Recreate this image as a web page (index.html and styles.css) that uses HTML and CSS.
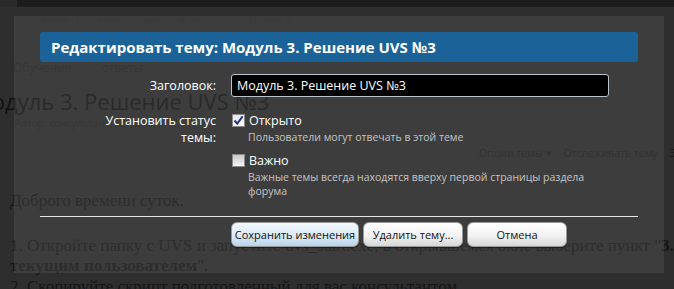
FILE: index.html
```html
<!DOCTYPE html>
<html>
	<head>
		<meta charset="UTF-8">
		<title>Редактировать тему</title>
		<link rel="stylesheet" href="styles.css">
	</head>
	<body>
		<div class="page">
			<div class="topbar"><span class="logo"></span></div>
			<div class="crumbs">Форум &rsaquo; Программы &rsaquo; Удалённый доступ &rsaquo; UVS &rsaquo; Модуль 3</div>
			<div class="tabs"><span>Обучение</span><span>ответы</span></div>
			<h1 class="topic">Модуль 3. Решение UVS №3</h1>
			<div class="byline">Автор: консультант, сегодня</div>
			<div class="tools"><span>Опции темы &#9662;</span><span>Отслеживать тему</span><span>Э</span></div>
			<div class="post">
				<p>Доброго времени суток.</p>
				<p class="line">1. Откройте папку с UVS и запустите uvs_start.exe, в открывшемся окне выберите пункт "<b>3. Запуск под</b></p>
				<p class="line"><b>текущим пользователем</b>".</p>
				<p class="line">2. Скопируйте скрипт подготовленный для вас консультантом</p>
			</div>
		</div>

		<div class="dialog">
			<div class="dialog-title">Редактировать тему: Модуль 3. Решение UVS №3</div>
			<div class="form">
				<label class="label label-title" for="title">Заголовок:</label>
				<input class="field" id="title" type="text" value="Модуль 3. Решение UVS №3">

				<div class="label label-status">Установить статус<br>темы:</div>
				<div class="options">
					<div class="option">
						<div class="option-head"><span class="check on"><svg width="11" height="11" viewBox="0 0 11 11"><path d="M1.5 5.5 L4.2 8.6 L9.6 1.4" fill="none" stroke="#23358f" stroke-width="2"/></svg></span>Открыто</div>
						<div class="option-desc">Пользователи могут отвечать в этой теме</div>
					</div>
					<div class="option">
						<div class="option-head"><span class="check"></span>Важно</div>
						<div class="option-desc">Важные темы всегда находятся вверху первой страницы раздела<br>форума</div>
					</div>
				</div>
			</div>
			<div class="rule"></div>
			<div class="buttons">
				<button class="btn btn-save">Сохранить изменения</button>
				<button class="btn btn-delete">Удалить тему...</button>
				<button class="btn btn-cancel">Отмена</button>
			</div>
		</div>
	</body>
</html>
```

FILE: styles.css
```css
*{
	margin: 0;
	padding: 0;
}
body{
	background-color: #2e2e2e;
	width: 674px;
	height: 289px;
	overflow: hidden;
	position: relative;
}
.page{
	width: 674px;
	height: 289px;
	overflow: hidden;
	color: #151515;
	font-family: "Open Sans", "Liberation Sans", sans-serif;
}
.topbar{
	height: 7px;
	background-color: #1c1c1c;
	display: flex;
}
.logo{
	width: 17px;
	background-color: #2a2a2a;
}
.crumbs{
	margin: 7px 0 0 40px;
	font-size: 9px;
	line-height: 11px;
	color: #2a2a2a;
	white-space: nowrap;
}
.tabs{
	margin: 36px 0 0 13px;
	display: flex;
	gap: 30px;
	font-size: 12px;
	line-height: 14px;
	color: #242424;
}
.topic{
	margin: 13px 0 0 -28px;
	font-size: 22px;
	font-weight: normal;
	line-height: 26px;
	color: #111;
	white-space: nowrap;
}
.byline{
	margin: 3px 0 0 15px;
	font-size: 10px;
	line-height: 12px;
	color: #252525;
}
.tools{
	margin: 18px 0 0 479px;
	display: flex;
	gap: 12px;
	font-size: 10.5px;
	line-height: 13px;
	color: #1d1d1d;
	white-space: nowrap;
}
.post{
	margin: 31px 0 0 10px;
	width: 760px;
	font-family: "Liberation Serif", serif;
	font-size: 17px;
	line-height: 20.5px;
	color: #151515;
}
.post p{
	margin-bottom: 24px;
	white-space: nowrap;
}
.post .line{
	margin-bottom: 0;
}

.dialog{
	position: absolute;
	left: 14px;
	top: 16px;
	width: 650px;
	height: 257px;
	box-sizing: border-box;
	padding: 16px 26px 0;
	background-color: rgba(90,90,90,0.36);
	font-family: "Open Sans", "Liberation Sans", sans-serif;
	color: #fff;
}
.dialog-title{
	height: 30px;
	padding-left: 11px;
	background-color: #1b6298;
	border-radius: 3px;
	font-size: 15px;
	font-weight: bold;
	line-height: 30px;
	white-space: nowrap;
}
.form{
	margin-top: 12px;
	display: grid;
	grid-template-columns: 176px 378px;
	column-gap: 15px;
	row-gap: 15px;
}
.label{
	text-align: right;
	font-size: 12.5px;
	line-height: 17px;
}
.label-title{
	line-height: 23px;
}
.field{
	height: 23px;
	box-sizing: border-box;
	padding: 0 5px;
	background-color: #000;
	border: 1px solid #b9c4cf;
	border-radius: 3px;
	color: #fff;
	font-family: "Open Sans", "Liberation Sans", sans-serif;
	font-size: 12.5px;
	outline: none;
}
.option + .option{
	margin-top: 7px;
}
.option-head{
	display: flex;
	align-items: center;
	gap: 4px;
	font-size: 12.5px;
	line-height: 17px;
}
.check{
	width: 11px;
	height: 11px;
	margin-left: 1px;
	border: 1px solid #8a8a8a;
	background: linear-gradient(#c9c9c9, #f4f4f4);
	display: flex;
	align-items: center;
	justify-content: center;
}
.check.on{
	background: linear-gradient(#e8e8e8, #ffffff);
}
.option-desc{
	margin: 1px 0 0 17px;
	font-size: 10.5px;
	line-height: 14.5px;
	color: #c4c4c4;
}
.rule{
	margin-top: 17px;
	height: 1px;
	background-color: #e6e6e6;
}
.buttons{
	margin: 5px 0 0 191px;
	display: flex;
	gap: 4px;
}
.btn{
	height: 25px;
	padding: 0;
	border: 1px solid #9a9a9a;
	border-radius: 6px;
	background: linear-gradient(#ffffff, #f2f2f2 55%, #d6d6d6);
	box-shadow: 0 1px 1px rgba(0,0,0,0.5);
	font-family: "Open Sans", "Liberation Sans", sans-serif;
	font-size: 11px;
	color: #111;
	white-space: nowrap;
	cursor: pointer;
}
.btn-save{
	width: 128px;
	background: linear-gradient(#f2f8fd, #dbeaf6 55%, #b9d3ea);
}
.btn-delete{
	width: 100px;
}
.btn-cancel{
	width: 100px;
}
```
